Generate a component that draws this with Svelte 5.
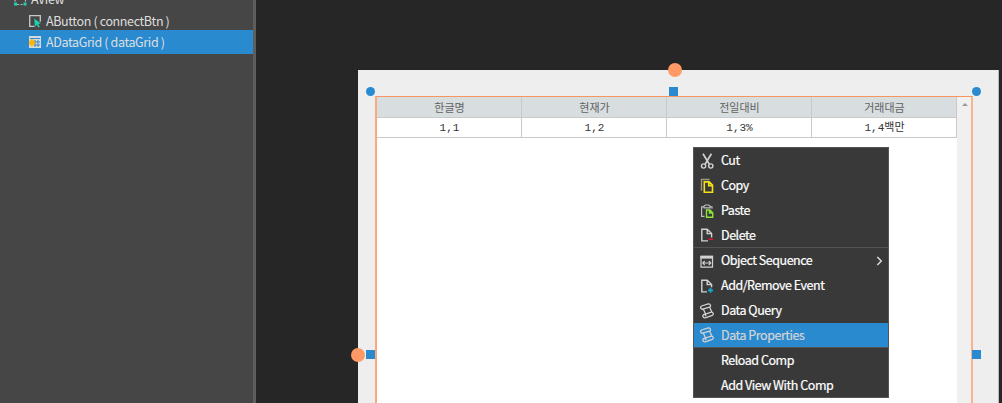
<script>
  const tree = [
    { label: 'AView', icon: 'view', root: true },
    { label: 'AButton ( connectBtn )', icon: 'button' },
    { label: 'ADataGrid ( dataGrid )', icon: 'grid', selected: true }
  ];
  const columns = ['한글명', '현재가', '전일대비', '거래대금'];
  const cells = ['1,1', '1,2', '1,3%', '1,4백만'];
  const menu = [
    { label: 'Cut', icon: 'cut' },
    { label: 'Copy', icon: 'copy' },
    { label: 'Paste', icon: 'paste' },
    { label: 'Delete', icon: 'delete', divided: true },
    { label: 'Object Sequence', icon: 'sequence', sub: true },
    { label: 'Add/Remove Event', icon: 'event' },
    { label: 'Data Query', icon: 'scroll' },
    { label: 'Data Properties', icon: 'scroll', active: true, divided: true },
    { label: 'Reload Comp' },
    { label: 'Add View With Comp' }
  ];
</script>

{#snippet icon(name)}
  <svg class="icon" width="16" height="16" viewBox="0 0 16 16" fill="none" stroke="#d2d2d2" stroke-width="1.4">
    {#if name === 'view'}
      <path d="M5 3h7M5 13.5h7M3 5v7M13.5 5v7" stroke="#bbb" stroke-width="1.2" stroke-dasharray="2 1.5" />
      <path d="M2 11.5h3v3H2zM11.5 11.5h3v3h-3zM2 2h3v3H2zM11.5 2h3v3h-3z" fill="#20d0b0" stroke="none" />
    {:else if name === 'button'}
      <path d="M7.5 13.3H2.7V2.7h10.6v6" stroke="#c8c8c8" stroke-width="1.3" />
      <path d="M7.3 5.5l6.5 5-2.6.4 1.7 2.8-1.5.9-1.7-2.8-1.8 1.9z" fill="#20d0b0" stroke="none" />
    {:else if name === 'grid'}
      <path d="M2 2h12v12H2z" fill="#d4dade" stroke="none" />
      <path d="M3 4.5h10M7 8h6M7 11h6M8 6v7M11 6v7" stroke="#378ac9" stroke-width="1" />
      <path d="M5 5v7.6M1.9 8.8h6.2M2.9 6.6l4.2 4.4M7.1 6.6L2.9 11" stroke="#ffb400" stroke-width="1.7" />
    {:else if name === 'cut'}
      <path d="M4 .8l6.4 10.6M12.4.8L6 11.4" stroke-width="1.7" />
      <circle cx="4.6" cy="13" r="2.1" /><circle cx="11.8" cy="13" r="2.1" />
    {:else if name === 'copy'}
      <path d="M2.5 12.8V1.5h8" stroke="#a09880" />
      <path d="M5.3 3.9h4.9l3.3 3.3v7H5.3zM9.7 4v3.6h3.6" stroke="#f5df16" stroke-width="1.6" />
    {:else if name === 'paste'}
      <path d="M5.5 13.3H2.6V3.8H5M11 3.8h2v2M5 4.8V3l1.5-1h3L11 3v1.8z" stroke="#bdbdbd" stroke-width="1.2" />
      <path d="M7.5 7h3.4l2.8 2.7v4.5H7.5zM10.5 7v3h3" stroke="#8ce638" />
    {:else if name === 'delete'}
      <path d="M9 13.9H2.8V2.3h5.4l4.4 4.3v4M8.2 2.3v4.3h4.4" />
      <path d="M9.5 12.3H14" stroke="#e2143c" stroke-width="1.5" />
    {:else if name === 'sequence'}
      <path d="M2 3.5h11.5v10.7H2z" stroke-width="1.2" />
      <path d="M1.4 2.6h12.7v3H1.4z" fill="#d2d2d2" stroke="none" />
      <path d="M3.8 10h8M5.7 8l-2 2 2 2M9.8 8l2 2-2 2" stroke-width="1.1" />
    {:else if name === 'event'}
      <path d="M8 13.9H2.8V2.3h5.4l4.4 4.3v2.6M8.2 2.3v4.3h4.4" />
      <path d="M11.5 9.8v5M9 12.3h5" stroke="#16acd8" stroke-width="1.7" />
    {:else if name === 'scroll'}
      <path d="M3.8 6.2c-2.1.4-3-2.4-1.2-3.2L9.2 1c2.3-.5 3.3 2.5 1.2 3.2zM4.4 6.2l2.2 4.9M10.7 4.3l2.3 5.1M6.4 11.2l5.9-2.1c2-.3 2.7 2.5 1 3.2l-7 2.5c-2.6.5-3.4-2.8-1.2-3.3 1.4-.2 1.8.8 1.4 1.7" stroke-width="1.3" />
    {/if}
  </svg>
{/snippet}

<div class="app">
  <aside>
    {#each tree as item}
      <div class="node" class:root={item.root} class:selected={item.selected}>
        {@render icon(item.icon)}<span>{item.label}</span>
      </div>
    {/each}
  </aside>
  <main>
    <section class="page">
      <div class="grid">
        <div class="table">
          {#each columns as column}<div class="cell head">{column}</div>{/each}
          {#each cells as cell, i}<div class="cell" class:unit={i === 3}>{cell}</div>{/each}
        </div>
        <div class="scrollbar"><i></i></div>
      </div>
      <b class="handle dot nw"></b><b class="handle n"></b><b class="handle dot ne"></b>
      <b class="handle w"></b><b class="handle e"></b>
      <b class="anchor top"></b><b class="anchor left"></b>
    </section>
  </main>
  <nav class="menu">
    {#each menu as item}
      <div class="item" class:divided={item.divided} class:active={item.active}>
        {@render icon(item.icon)}<span>{item.label}</span>
        {#if item.sub}
          <svg class="chevron" width="7" height="10" viewBox="0 0 7 10" fill="none" stroke="#d8d8d8" stroke-width="1.5"><path d="M1.3 1l4 4-4 4" /></svg>
        {/if}
      </div>
    {/each}
  </nav>
</div>

<style>
  .app {
    position: relative;
    display: flex;
    width: 1002px;
    height: 403px;
    overflow: hidden;
    background: #262626;
    font: 13px/24px "Noto Sans CJK KR", sans-serif;
  }
  .icon { flex: none; }
  aside {
    box-sizing: border-box;
    width: 256px;
    border-right: 3px solid #5e5e5e;
    background: #464646;
    color: #dedede;
  }
  .node {
    display: flex;
    align-items: center;
    box-sizing: border-box;
    height: 24px;
    padding-left: 27px;
    gap: 3px;
    white-space: nowrap;
  }
  .node span { font-size: 12.5px; letter-spacing: -0.37px; }
  .root { height: 24px; margin-top: -13px; padding-left: 12px; }
  .node:nth-child(2) { height: 19px; }
  .selected { background: #2a8ad0; }
  main { flex: 1; padding: 70px 0 0 102px; }
  .page {
    position: relative;
    box-sizing: border-box;
    width: 641px;
    height: 333px;
    padding: 26px 0 0 17px;
    border-right: 1px solid #bbb;
    background: #eee;
  }
  .grid {
    display: flex;
    box-sizing: border-box;
    width: 598px;
    height: 320px;
    border: 1px solid #f79660;
    border-width: 1px 2px;
    border-left-color: #f9a97c;
    border-right-color: #f9b48d;
    background: #fff;
  }
  .table {
    display: grid;
    grid-template-columns: repeat(4, 145px);
    grid-template-rows: 21px 20px;
    align-content: start;
    width: 580px;
  }
  .cell {
    box-sizing: border-box;
    border-right: 1px solid #c9c9c9;
    border-bottom: 1px solid #c9c9c9;
    color: #333;
    font: 11px/20px "Liberation Mono", "Noto Sans CJK KR", monospace;
    text-align: center;
    padding-left: 1px;
  }
  .unit { line-height: 21px; }
  .head {
    background: #d8dde0;
    color: #626262;
    font-family: "Noto Sans CJK KR", sans-serif;
    line-height: 21px;
  }
  .scrollbar { width: 14px; background: #f0f0f0; }
  .scrollbar i {
    display: block;
    width: 0;
    margin: 6px auto 0 5px;
    border: 3px solid transparent;
    border-top: 0;
    border-bottom-color: #999;
  }
  .handle { position: absolute; width: 9px; height: 9px; background: #2a8ad0; }
  .dot { border-radius: 50%; }
  .nw { left: 8px; top: 17px; }
  .n { left: 311px; top: 17px; }
  .ne { left: 614px; top: 17px; }
  .w { left: 8px; top: 280px; }
  .e { left: 614px; top: 280px; }
  .anchor { position: absolute; width: 14px; height: 14px; border-radius: 50%; background: #ff9966; }
  .top { left: 309.5px; top: -7px; }
  .left { left: -7px; top: 278px; }
  .menu {
    position: absolute;
    left: 693px;
    top: 147px;
    box-sizing: border-box;
    width: 196px;
    height: 251px;
    border: 1px solid #555;
    background: #393939;
    color: #fff;
  }
  .item {
    display: flex;
    align-items: center;
    box-sizing: border-box;
    height: 25px;
    padding: 0 5px 0 5px;
    gap: 6px;
    white-space: nowrap;
  }
  .item span {
    padding-bottom: 1px;
    font-size: 12.5px;
    letter-spacing: -0.47px;
    -webkit-text-stroke: 0.2px currentColor;
  }
  .divided { border-bottom: 1px solid #555; }
  .active { background: #2a8ad0; color: #d4d4d4; }
  .chevron { margin-left: auto; }
</style>
